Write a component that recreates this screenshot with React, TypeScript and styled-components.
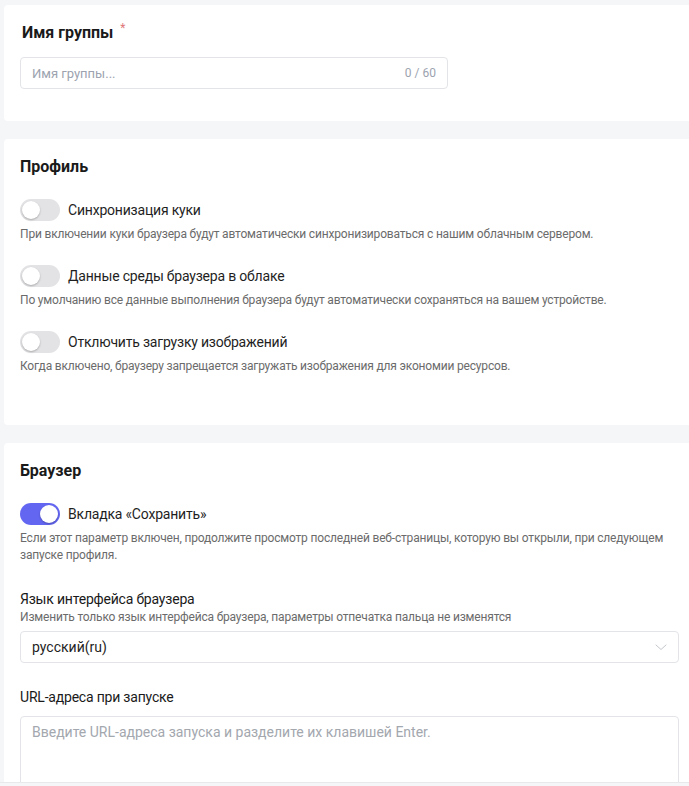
import React, { useState } from 'react'
import styled, { createGlobalStyle } from 'styled-components'

const GlobalStyle = createGlobalStyle`
  * {
    box-sizing: border-box;
  }
  html, body {
    margin: 0;
    padding: 0;
    background: #f5f6f8;
    overflow: hidden;
  }
  body {
    font-family: Roboto, 'Noto Sans', Arial, sans-serif;
    color: #1f1f1f;
  }
`

interface ToggleSetting {
  key: string
  label: string
  description: string
}

const profileSettings: ToggleSetting[] = [
  {
    key: 'cookies',
    label: 'Синхронизация куки',
    description:
      'При включении куки браузера будут автоматически синхронизироваться с нашим облачным сервером.'
  },
  {
    key: 'cloud',
    label: 'Данные среды браузера в облаке',
    description:
      'По умолчанию все данные выполнения браузера будут автоматически сохраняться на вашем устройстве.'
  },
  {
    key: 'images',
    label: 'Отключить загрузку изображений',
    description:
      'Когда включено, браузеру запрещается загружать изображения для экономии ресурсов.'
  }
]

const App: React.FC = () => {
  const [groupName, setGroupName] = useState('')
  const [toggles, setToggles] = useState<{ [key: string]: boolean }>({
    cookies: false,
    cloud: false,
    images: false,
    saveTab: true
  })

  const flip = (key: string) => setToggles({ ...toggles, [key]: !toggles[key] })

  return (
    <>
      <GlobalStyle />
      <Page>
        <Card $height={116}>
          <GroupTitle>
            Имя группы<Required>*</Required>
          </GroupTitle>
          <InputWrap>
            <TextInput
              placeholder='Имя группы...'
              value={groupName}
              maxLength={60}
              onChange={e => setGroupName(e.target.value)}
            />
            <Counter>{groupName.length} / 60</Counter>
          </InputWrap>
        </Card>

        <Card $height={286}>
          <SectionTitle>Профиль</SectionTitle>
          {profileSettings.map(s => (
            <Setting key={s.key}>
              <SettingHead>
                <Switch $on={toggles[s.key]} onClick={() => flip(s.key)} />
                <SettingLabel>{s.label}</SettingLabel>
              </SettingHead>
              <Hint>{s.description}</Hint>
            </Setting>
          ))}
        </Card>

        <Card>
          <SectionTitle>Браузер</SectionTitle>
          <Setting>
            <SettingHead>
              <Switch $on={toggles.saveTab} onClick={() => flip('saveTab')} />
              <SettingLabel>Вкладка «Сохранить»</SettingLabel>
            </SettingHead>
            <Hint>
              Если этот параметр включен, продолжите просмотр последней
              веб-страницы, которую вы открыли, при следующем запуске профиля.
            </Hint>
          </Setting>

          <Field>
            <FieldLabel>Язык интерфейса браузера</FieldLabel>
            <FieldHint>
              Изменить только язык интерфейса браузера, параметры отпечатка
              пальца не изменятся
            </FieldHint>
            <SelectBox>
              <span>русский(ru)</span>
              <svg width='14' height='14' viewBox='0 0 14 14' fill='none'>
                <path
                  d='M2 5l5 4.5L12 5'
                  stroke='#c4c7cc'
                  strokeWidth='1'
                  strokeLinecap='round'
                  strokeLinejoin='round'
                />
              </svg>
            </SelectBox>
          </Field>

          <Field>
            <FieldLabel $spaced>URL-адреса при запуске</FieldLabel>
            <TextArea placeholder='Введите URL-адреса запуска и разделите их клавишей Enter.' />
          </Field>
        </Card>
      </Page>
      <Footer />
    </>
  )
}

const Page = styled.div`
  display: flex;
  flex-direction: column;
  gap: 18px;
  padding: 5px 0 0 4px;
  width: 695px;
`

const Card = styled.section<{ $height?: number }>`
  background: #fff;
  border-radius: 4px;
  padding: 16px;
  ${p => (p.$height ? `height: ${p.$height}px;` : 'min-height: 360px;')}
`

const GroupTitle = styled.div`
  font-size: 16px;
  font-weight: 700;
  line-height: 24px;
  margin: 0 0 12px 2px;
  color: #1a1a1a;
`

const Required = styled.sup`
  color: #e0787a;
  font-size: 12px;
  font-weight: 400;
  margin-left: 7px;
  vertical-align: 6px;
  line-height: 0;
`

const InputWrap = styled.div`
  display: flex;
  align-items: center;
  width: 428px;
  height: 32px;
  border: 1px solid #e2e4e8;
  border-radius: 4px;
  padding: 0 11px;
`

const TextInput = styled.input`
  flex: 1;
  border: none;
  outline: none;
  font: inherit;
  font-size: 13px;
  color: #1f1f1f;
  background: transparent;
  padding: 0;

  &::placeholder {
    color: #9ca3af;
  }
`

const Counter = styled.span`
  font-size: 12px;
  color: #9ca3af;
`

const SectionTitle = styled.h2`
  font-size: 16px;
  font-weight: 700;
  line-height: 24px;
  margin: 0 0 19px;
  color: #1a1a1a;
`

const Setting = styled.div`
  display: flex;
  flex-direction: column;
  margin-bottom: 21px;
`

const SettingHead = styled.div`
  display: flex;
  align-items: center;
  gap: 8px;
  height: 24px;
`

const Switch = styled.button<{ $on: boolean }>`
  position: relative;
  width: 40px;
  height: 22px;
  border: none;
  border-radius: 11px;
  padding: 0;
  cursor: pointer;
  background: ${p => (p.$on ? '#6366f1' : '#e3e3e5')};

  &::after {
    content: '';
    position: absolute;
    top: 2px;
    left: ${p => (p.$on ? '20px' : '2px')};
    width: 18px;
    height: 18px;
    border-radius: 50%;
    background: #fff;
    box-shadow: 0 1px 2px rgba(0, 0, 0, 0.25);
  }
`

const SettingLabel = styled.span`
  font-size: 14px;
  letter-spacing: -0.2px;
  color: #1f1f1f;
`

const Hint = styled.p`
  margin: 4px 0 0;
  font-size: 12px;
  line-height: 17px;
  letter-spacing: -0.18px;
  color: #6b6b6b;
`

const Field = styled.div`
  display: flex;
  flex-direction: column;
  padding-top: 4px;
  margin-bottom: 20px;
`

const FieldLabel = styled.div<{ $spaced?: boolean }>`
  font-size: 14px;
  line-height: 20px;
  letter-spacing: -0.2px;
  color: #1a1a1a;
  margin-bottom: ${p => (p.$spaced ? '9px' : '0')};
`

const FieldHint = styled.div`
  font-size: 12px;
  line-height: 17px;
  letter-spacing: -0.18px;
  color: #6b6b6b;
  margin-bottom: 5px;
`

const SelectBox = styled.div`
  display: flex;
  align-items: center;
  justify-content: space-between;
  height: 32px;
  border: 1px solid #e2e4e8;
  border-radius: 4px;
  padding: 0 10px 0 11px;
  font-size: 14px;
  color: #1f1f1f;
  cursor: pointer;
`

const TextArea = styled.textarea`
  height: 100px;
  border: 1px solid #e2e4e8;
  border-radius: 4px;
  padding: 7px 11px;
  font: inherit;
  font-size: 14px;
  resize: none;
  outline: none;

  &::placeholder {
    color: #a3a7ae;
  }
`

const Footer = styled.div`
  position: fixed;
  left: 0;
  right: 0;
  bottom: 0;
  height: 4px;
  background: #f5f6f8;
  border-top: 1px solid #e8e9eb;
`

export default App
